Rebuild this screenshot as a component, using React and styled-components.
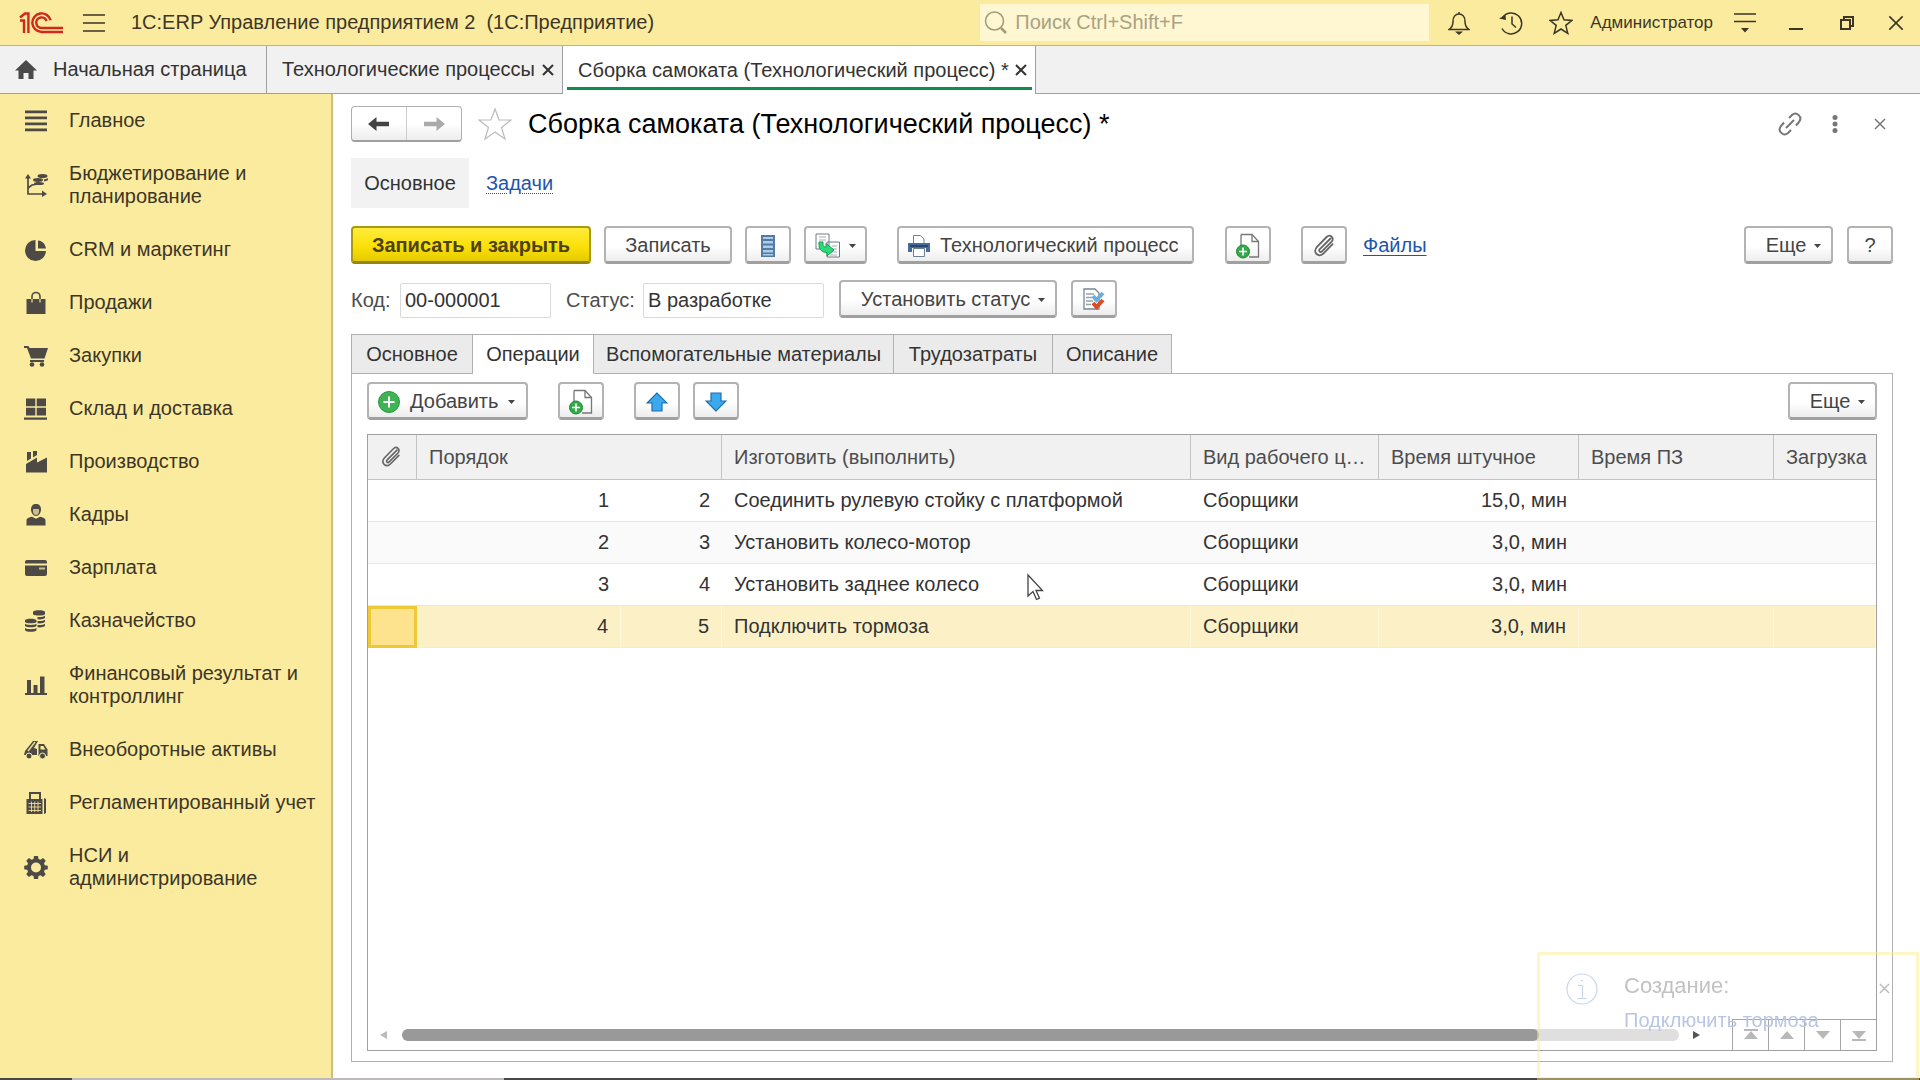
import React from 'react';
import styled, { createGlobalStyle, css } from 'styled-components';

const GlobalStyle = createGlobalStyle`
	* {
		box-sizing: border-box;
	}
	body {
		margin: 0;
		background: #fff;
	}
	body, button, input, table {
		font-family: 'Liberation Sans', Arial, sans-serif;
		font-size: 20px;
		line-height: 23px;
		color: #333;
	}
	button {
		padding: 0;
		border: 0;
		background: none;
	}
	svg {
		display: block;
		flex: none;
	}
`;

const Page = styled.div`
	display: flex;
	flex-direction: column;
	min-height: 100vh;
`;

const Header = styled.header`
	display: flex;
	align-items: center;
	height: 46px;
	padding-left: 19px;
	background: #fbeb9e;
	border-bottom: 1px solid #c3b573;
	color: #3d3626;
`;
const AppTitle = styled.div`
	flex: 1;
	margin-left: 6px;
	white-space: pre;
`;
const SearchBox = styled.label`
	display: flex;
	align-items: center;
	gap: 6px;
	width: 449px;
	height: 37px;
	margin-right: 14px;
	padding-left: 4px;
	background: #fff6d2;
`;
const SearchInput = styled.input`
	flex: 1;
	min-width: 0;
	border: 0;
	outline: 0;
	background: none;
	&::placeholder {
		color: #a9a284;
		opacity: 1;
	}
`;
const HeaderButton = styled.button`
	display: flex;
	align-items: center;
	justify-content: center;
	width: ${p => p.$width || 51}px;
	height: 40px;
	color: #3d3626;
`;
const UserName = styled.span`
	margin: 0 6px 0 14px;
	font-size: 17px;
`;

const WindowTabs = styled.nav`
	display: flex;
	height: 48px;
	background: #f1f1f1;
	border-bottom: 1px solid #a0a0a0;
`;
const WindowTab = styled.div`
	display: flex;
	align-items: center;
	width: ${p => p.$width}px;
	padding: 0 8px 0 15px;
	border-right: 1px solid #a0a0a0;
	white-space: nowrap;
	${p =>
		p.$active &&
		css`
			margin-bottom: -1px;
			background: linear-gradient(#0f8c50, #0f8c50) 4px 41px / calc(100% - 7px) 3px no-repeat #fff;
		`};
`;
const TabLabel = styled.button`
	display: flex;
	align-items: center;
	gap: 16px;
	flex: 1;
	min-width: 0;
	white-space: nowrap;
`;
const TabClose = styled.button`
	display: flex;
	align-items: center;
	justify-content: flex-end;
	width: 16px;
	height: 24px;
`;

const Body = styled.div`
	display: flex;
	flex: 1;
`;
const Sidebar = styled.nav`
	flex: none;
	width: 333px;
	background: #fbeb9e;
	border-right: 2px solid #cfbf7c;
`;
const SectionLink = styled.a`
	display: flex;
	align-items: center;
	gap: 21px;
	padding: 15px 16px 15px 24px;
	color: #3d3626;
	text-decoration: none;
	white-space: pre;
	svg {
		margin: -2px 0;
		color: #4d4a45;
	}
`;

const Main = styled.main`
	display: flex;
	flex: 1;
	flex-direction: column;
	min-width: 0;
	padding: 12px 27px 16px 18px;
`;
const Row = styled.div`
	display: flex;
	align-items: center;
`;
const TitleRow = styled(Row)`
	height: 36px;
	margin-right: -9px;
`;
const NavButtons = styled.div`
	display: flex;
	width: 111px;
	height: 36px;
	margin-right: 16px;
	border: 1px solid #b0b0b0;
	border-bottom: 2px solid #a0a0a0;
	border-radius: 4px;
	background: linear-gradient(#fff 50%, #ededed);
	button {
		display: flex;
		flex: 1;
		align-items: center;
		justify-content: center;
	}
	button + button {
		border-left: 1px solid #ccc;
	}
`;
const Title = styled.h1`
	flex: 1;
	margin: 0 0 0 16px;
	font-size: 27px;
	line-height: 30px;
	font-weight: normal;
	color: #000;
`;
const IconButton = styled.button`
	display: flex;
	align-items: center;
	justify-content: center;
	width: 45px;
	height: 36px;
	color: #777;
`;

const SubNav = styled(Row)`
	height: 50px;
	margin-top: 16px;
	gap: 17px;
`;
const SubNavCurrent = styled.button`
	width: 118px;
	height: 50px;
	background: #f2f2f2;
`;
const Link = styled.a`
	color: #1d54ad;
	text-decoration: underline ${p => (p.$dotted ? 'dotted' : 'solid')} 1px;
	text-underline-offset: 3px;
`;
const FilesLink = styled(Link)`
	margin-left: 16px;
`;

const CommandBar = styled(Row)`
	height: 38px;
	margin-top: ${p => p.$top}px;
`;
const Button = styled.button`
	display: flex;
	align-items: center;
	justify-content: ${p => (p.$left ? 'flex-start' : 'center')};
	gap: 8px;
	width: ${p => p.$width || 46}px;
	height: 38px;
	margin-left: ${p => p.$before || 0}px;
	padding: 2px 0 0 ${p => (p.$left ? 9 : 0)}px;
	border: 2px solid #b3b3b3;
	border-bottom: 3px solid #a0a0a0;
	border-radius: 4px;
	background: linear-gradient(#fff 55%, #ededed);
	color: #444;
	white-space: nowrap;
	${p =>
		p.$left &&
		css`
			gap: 10px;
		`};
	${p =>
		p.$primary &&
		css`
			border-color: #a89a10;
			border-bottom-color: #948600;
			background: linear-gradient(#ffec3c, #fbe008 55%, #e6cb00);
			color: #4d4310;
			font-weight: bold;
		`};
`;
const MenuButton = styled(Button)`
	padding-left: 10px;
`;
const Spacer = styled.div`
	flex: 1;
`;
const Field = styled.label`
	display: flex;
	align-items: center;
	justify-content: space-between;
	width: ${p => p.$width}px;
	margin-right: 15px;
	padding-top: 2px;
	color: #4d4d4d;
`;
const FieldInput = styled.input`
	width: ${p => p.$width}px;
	height: 35px;
	padding: 0 4px;
	border: 1px solid #d9d9d9;
	border-radius: 2px;
	outline: 0;
	background: #fff;
`;

const Tabs = styled.div`
	display: flex;
	height: 40px;
	margin-top: 16px;
	margin-bottom: -1px;
`;
const Tab = styled.button`
	width: ${p => p.$width}px;
	border: solid #b0b0b0;
	border-width: 1px 1px 1px 0;
	background: ${p => (p.$active ? '#fff' : '#ebebeb')};
	border-bottom-color: ${p => (p.$active ? '#fff' : '#b0b0b0')};
	white-space: nowrap;
	z-index: 1;
	&:first-child {
		border-left-width: 1px;
	}
`;
const Panel = styled.section`
	display: flex;
	flex: 1;
	flex-direction: column;
	padding: 0 15px 10px;
	border: 1px solid #b0b0b0;
`;

const Grid = styled.div`
	display: flex;
	flex: 1;
	flex-direction: column;
	margin-top: 14px;
	border: 1px solid #a0a0a0;
	overflow: hidden;
`;
const Table = styled.table`
	width: 100%;
	table-layout: fixed;
	border-collapse: separate;
	border-spacing: 0;
`;
const HeadCell = styled.th`
	height: 45px;
	padding: 0 10px 0 12px;
	background: #f1f1f1;
	border-bottom: 1px solid #c4c4c4;
	border-right: 1px solid #c4c4c4;
	color: #4d4d4d;
	font-weight: normal;
	text-align: left;
	white-space: nowrap;
	overflow: hidden;
	text-overflow: ellipsis;
	&:last-child {
		padding-right: 0;
		border-right: 0;
	}
`;
const Cell = styled.td`
	height: 42px;
	padding: 0 12px;
	border-bottom: 1px solid #e6e6e6;
	text-align: ${p => (p.$number ? 'right' : 'left')};
	white-space: nowrap;
`;
const TableRow = styled.tr`
	&:nth-child(even) {
		background: #fafafa;
	}
	${p =>
		p.$selected &&
		css`
			&& {
				background: #fcf1c6;
			}
			${Cell} {
				border-right: 1px solid #fdf6dc;
				border-bottom-color: #f5edcf;
			}
			${Cell}:first-child {
				background: #fde38e;
				border: 0;
				box-shadow: inset 0 0 0 3px #edc937;
			}
		`};
`;
const GridFooter = styled.div`
	display: flex;
	align-items: center;
	height: 31px;
	margin-top: auto;
	padding-left: 12px;
`;
const ScrollTrack = styled.div`
	flex: 1;
	height: 12px;
	margin: 0 14px 0 15px;
	border-radius: 6px;
	background: #dfdfdf;
`;
const ScrollThumb = styled.div`
	width: 89%;
	height: 12px;
	border-radius: 6px;
	background: #999;
`;
const PageButtons = styled.div`
	display: flex;
	align-self: stretch;
	margin-left: 32px;
`;
const PageButton = styled.button`
	display: flex;
	align-items: center;
	justify-content: center;
	width: 36px;
	border: solid #a6a6a6;
	border-width: 1px 0 0 1px;
`;

const Taskbar = styled.div`
	height: 2px;
	background: linear-gradient(90deg, #4c4747 72px, #bdb9bd 72px, #bdb9bd 504px, #4c4747 504px);
`;

// a notification that is half way through fading out
const Toast = styled.aside`
	position: fixed;
	right: 1px;
	bottom: 0;
	display: flex;
	align-items: flex-start;
	width: 382px;
	height: 128px;
	padding: 16px 26px 0 26px;
	border: 3px solid rgba(255, 236, 130, 0.45);
`;
const ToastText = styled.div`
	flex: 1;
	margin-left: 26px;
`;
const ToastTitle = styled.div`
	font-size: 22px;
	line-height: 30px;
	margin-bottom: 8px;
	color: #c2c2c2;
`;
const ToastLink = styled.a`
	color: #b9c6e2;
	text-decoration: none;
`;
const ToastClose = styled.button`
	margin-top: 12px;
`;

const Cursor = styled.svg`
	position: fixed;
	left: 1026px;
	top: 573px;
`;

const Logo = () => (
	<svg width='44' height='22' viewBox='0 0 44 22' fill='none' stroke='#d0281c' strokeWidth='2.4'>
		<path d='M1 5.500 6 1.500h3.400V21M1 8.500h4V21' />
		<path d='M31.600 8.300A9.300 9.300 0 1 0 22.500 20H44' />
		<path d='M27.600 9A5.300 5.300 0 1 0 22.500 16H44' />
	</svg>
);

const Cross = ({ size = 12, color = 'currentColor', width = 2 }) => (
	<svg width={size} height={size} viewBox='0 0 12 12' fill='none' stroke={color} strokeWidth={width}>
		<path d='M1 1l10 10M11 1 1 11' />
	</svg>
);

const Caret = () => (
	<svg width='7' height='4' viewBox='0 0 7 4'>
		<path d='M0 0h7L3.500 4z' fill='#444' />
	</svg>
);

const Clip = ({ size = 24 }) => (
	<svg width={size} height={size} viewBox='0 0 24 24' fill='none' stroke='#666' strokeWidth='1.800' strokeLinecap='round'>
		<path d='M18.500 4.500 7.800 15.200c-1.600 1.800.6 3.800 2.200 2.200l9.600-9.800c3.400-3.800-1.600-8-5-4.600L5 12.800c-5 5.400 1.600 11.600 6.600 6.600l9-9.200' />
	</svg>
);

const NewDoc = () => (
	<svg width='26' height='28' viewBox='0 0 26 28' fill='none'>
		<path d='M6 2.500h5M6 2.500V14M14 25h9.500V9.500L17 2.500H6' stroke='#777' strokeWidth='1.300' />
		<path d='M17 2.500v7h6.500' stroke='#777' strokeWidth='1.300' />
		<circle cx='8' cy='19.500' r='6.500' fill='#35a849' stroke='#1d8732' />
		<path d='M8 15.500v8M4 19.500h8' stroke='#fff' strokeWidth='1.600' />
	</svg>
);

const Arrow = ({ color, flip }) => (
	<svg width='22' height='16' viewBox='0 0 22 16'>
		<path
			d={flip ? 'M22 8 13.500 1v4.800H1v4.400h12.500V15z' : 'M0 8l8.500-7v4.800H21v4.400H8.500V15z'}
			fill={color}
		/>
	</svg>
);

const BlueArrow = ({ down }) => (
	<svg width='22' height='20' viewBox='0 0 22 20'>
		<path
			d={down ? 'M11 19 1 9h5V1h10v8h5z' : 'M11 1 1 11h5v8h10v-8h5z'}
			fill='#3ba9ee'
			stroke='#1f6fa8'
			strokeWidth='1.200'
		/>
	</svg>
);

const PageArrow = ({ down, edge }) => (
	<svg width='16' height='12' viewBox='0 0 16 12' fill='#b8b8b8'>
		<path d={down ? 'M1 2h14l-7 8z' : 'M1 10h14L8 2z'} />
		{edge && <path d={down ? 'M1 10h14v2H1z' : 'M1 0h14v2H1z'} />}
	</svg>
);

const glyphs = {
	main: <path d='M1 1.500h22v2.800H1zM1 7.500h22v2.800H1zM1 13.500h22v2.800H1zM1 19.500h22v2.800H1z' />,
	budget: (
		<g>
			<path d='M4 3v18h16M4 15l4-3 3-.5 3-2' fill='none' stroke='currentColor' strokeWidth='1.700' />
			<path d='M1 5.500 4 1l3 4.500zM18 17.500l5 3.500-5 3z' />
			<ellipse cx='18.500' cy='3' rx='5' ry='2' />
			<ellipse cx='14' cy='7' rx='5' ry='1.900' />
			<ellipse cx='15' cy='10.500' rx='5' ry='1.500' />
			<path d='M20 6.500l4-1.200v2l-4 1.300z' />
		</g>
	),
	crm: (
		<g>
			<circle cx='11.500' cy='12.500' r='10.500' />
			<path d='M11.500 0v13H24V9.500h-9V0z' fill='#fbeb9e' />
			<path d='M14 2.500A9 9 0 0 1 22 10.500h-8z' />
		</g>
	),
	sales: (
		<g>
			<path d='M2.500 8h19v15h-19z' />
			<path d='M8 8V5.500a4 4 0 0 1 8 0V8' fill='none' stroke='currentColor' strokeWidth='1.600' />
			<path d='M8 8v3.500M16 8v3.500' stroke='#fbeb9e' strokeWidth='1.200' />
		</g>
	),
	purchase: (
		<g>
			<path d='M0 2h4.500l1 2H24l-3.500 10.500H7L3 4H0z' />
			<path d='M6 16h14v2H6z' />
			<circle cx='8' cy='20.500' r='2.300' />
			<circle cx='18' cy='20.500' r='2.300' />
		</g>
	),
	stock: <path d='M2 1.500h9.300v7.800H2zM12.700 1.500H22v7.800h-9.300zM2 10.700h9.300v7.800H2zM12.700 10.700H22v7.800h-9.300zM0 20.500h23v2.300H0z' />,
	production: <path d='M2 22.500V14l11-6.500v5L23 7.500v15zM3 2h4v6.500l-4 2.500zM9 1h4v4l-4 2.500z' />,
	staff: (
		<g>
			<path d='M12 1c-3.200 0-5 2-5 5.500 0 3.200 2.200 6.500 5 6.500s5-3.300 5-6.500C17 3 15.200 1 12 1z' />
			<path d='M9 6h6v2.500c0 2-1.300 3.500-3 3.500s-3-1.500-3-3.500z' fill='#cabf85' />
			<path d='M2.500 22.500v-5c0-2 1.500-2.700 5.500-3.700l4 2 4-2c4 1 5.500 1.700 5.500 3.700v5z' />
		</g>
	),
	salary: (
		<g>
			<path d='M3 4h18a2 2 0 0 1 2 2v1.500H1V6a2 2 0 0 1 2-2zM1 9.500h22V18a2 2 0 0 1-2 2H3a2 2 0 0 1-2-2z' />
			<path d='M15 11.500h6v2h-6z' fill='#cabf85' />
		</g>
	),
	treasury: (
		<g>
			<path d='M9 3c0-2.500 12-2.500 12 0v2c0 2-12 2-12 0zM13.500 8c3 .3 6.500-.2 7.500-1.200V9c-1 1.200-4.500 1.600-7.500 1.300zM13.500 12c3 .3 6.500-.2 7.500-1.200V13c-1 1.200-4.500 1.600-7.500 1.300zM13.500 16c3 .3 6.500-.2 7.500-1.200V17c-1 1.200-4.500 1.600-7.500 1.300z' />
			<path d='M1 11.500c0-2.300 11.500-2.300 11.500 0v1.200c0 2-11.500 2-11.500 0zM1 14.700c2 1.600 9.500 1.600 11.500 0v2.200c-1.500 1.800-10 1.800-11.500 0zM1 19c2 1.600 9.500 1.600 11.500 0v2.200c-1.500 2-10 2-11.500 0z' />
		</g>
	),
	finance: <path d='M3 7h4v13h2.500v-8h4v8H16V3.500h4.500V20H23v2H1v-2h2z' />,
	assets: (
		<g>
			<path d='M1 13 9 3h5l-4 7 3 1v6H0z' />
			<path d='M4 13l7-9' stroke='#e8da95' strokeWidth='1.500' />
			<path d='M14.500 6H20l3.500 5.500V18H14.500z' />
			<path d='M16.500 8h2.800l2 3.500h-4.800z' fill='#fbeb9e' />
			<circle cx='5' cy='18' r='3' stroke='#fbeb9e' strokeWidth='1' />
			<circle cx='18.500' cy='18' r='3' stroke='#fbeb9e' strokeWidth='1' />
		</g>
	),
	accounting: (
		<g>
			<path d='M5 1h12v7h1.500v15H2.500V8H5zM20 7l2 1v14l-2 1z' />
			<path d='M7 3h8v5H7z' fill='#fbeb9e' />
			<path d='M4.500 12.500H17M4.500 16H17M4.500 19.500H17M7.500 10.500V21M10.700 10.500V21M14 10.500V21' stroke='#fbeb9e' strokeWidth='.8' />
		</g>
	),
	settings: (
		<path
			fillRule='evenodd'
			d='M10 1h4l.5 3 2 .8L19 3l2.800 2.800L20 8.300l.8 2 3 .5v3.400l-3 .6-.8 2 1.800 2.500L19 22l-2.500-1.800-2 .8-.5 3h-4l-.5-3-2-.8L5 22l-2.800-2.700L4 16.800l-.8-2-3-.6v-3.400l3-.5.8-2L2.200 5.800 5 3l2.500 1.800 2-.8zM12 7.500a5 5 0 1 0 0 10 5 5 0 0 0 0-10z'
		/>
	)
};

const sections = [
	['main', 'Главное'],
	['budget', 'Бюджетирование и\nпланирование'],
	['crm', 'CRM и маркетинг'],
	['sales', 'Продажи'],
	['purchase', 'Закупки'],
	['stock', 'Склад и доставка'],
	['production', 'Производство'],
	['staff', 'Кадры'],
	['salary', 'Зарплата'],
	['treasury', 'Казначейство'],
	['finance', 'Финансовый результат и\nконтроллинг'],
	['assets', 'Внеоборотные активы'],
	['accounting', 'Регламентированный учет'],
	['settings', 'НСИ и\nадминистрирование']
];

const tabs = [
	['Основное', 122],
	['Операции', 121],
	['Вспомогательные материалы', 300],
	['Трудозатраты', 159],
	['Описание', 119]
];

const operations = [
	{ order: 1, next: 2, name: 'Соединить рулевую стойку с платформой', center: 'Сборщики', time: '15,0, мин' },
	{ order: 2, next: 3, name: 'Установить колесо-мотор', center: 'Сборщики', time: '3,0, мин' },
	{ order: 3, next: 4, name: 'Установить заднее колесо', center: 'Сборщики', time: '3,0, мин' },
	{ order: 4, next: 5, name: 'Подключить тормоза', center: 'Сборщики', time: '3,0, мин' }
];

const TopBar = () => (
	<Header>
		<Logo />
		<HeaderButton $width={62} aria-label='Меню'>
			<svg width='22' height='18' viewBox='0 0 22 18' stroke='currentColor' strokeWidth='1.500'>
				<path d='M0 1h22M0 9h22M0 17h22' />
			</svg>
		</HeaderButton>
		<AppTitle>{'1C:ERP Управление предприятием 2  (1С:Предприятие)'}</AppTitle>
		<SearchBox>
			<svg width='23' height='23' viewBox='0 0 23 23' fill='none' stroke='#a39b78' strokeWidth='1.500'>
				<circle cx='10.500' cy='10' r='9' />
				<path d='M17 17l5 5' strokeWidth='2.500' />
			</svg>
			<SearchInput placeholder='Поиск Ctrl+Shift+F' aria-label='Поиск' />
		</SearchBox>
		<HeaderButton $width={32} aria-label='Уведомления'>
			<svg width='22' height='24' viewBox='0 0 22 24' fill='none' stroke='currentColor' strokeWidth='1.500'>
				<path d='M11 1v2M1 18.500c3-2 4-4 4-8C5 6 7.500 3 11 3s6 3 6 7.500c0 4 1 6 4 8z' />
				<path d='M7 20.500h8L11 24z' fill='currentColor' stroke='none' />
			</svg>
		</HeaderButton>
		<HeaderButton $width={71} aria-label='История'>
			<svg width='24' height='24' viewBox='0 0 24 24' fill='none' stroke='currentColor' strokeWidth='1.500'>
				<path d='M3.500 6.500A10.500 10.500 0 1 1 3 17.500M13 5.500V13l4 3.500' />
				<path d='M0 7.500 7 9l-.5-5z' fill='currentColor' stroke='none' />
			</svg>
		</HeaderButton>
		<HeaderButton $width={30} aria-label='Избранное'>
			<svg width='24' height='24' viewBox='0 0 24 24' fill='none' stroke='currentColor' strokeWidth='1.500'>
				<path d='M12 1.500l3 7.300 8 .6-6.200 5 2 8L12 18l-6.800 4.400 2-8L1 9.400l8-.6z' />
			</svg>
		</HeaderButton>
		<UserName>Администратор</UserName>
		<HeaderButton aria-label='Настройки'>
			<svg width='22' height='20' viewBox='0 0 22 20' stroke='currentColor' strokeWidth='1.500'>
				<path d='M0 1h22M0 8.500h22' />
				<path d='M7 15h8l-4 4.500z' fill='currentColor' stroke='none' />
			</svg>
		</HeaderButton>
		<HeaderButton aria-label='Свернуть'>
			<svg width='14' height='16' viewBox='0 0 14 16'>
				<path d='M0 13h14v2H0z' fill='currentColor' />
			</svg>
		</HeaderButton>
		<HeaderButton aria-label='Восстановить'>
			<svg width='14' height='14' viewBox='0 0 14 14' fill='none' stroke='currentColor' strokeWidth='2'>
				<path d='M1 4h9v9H1zM4 4V1h9v9h-3' />
			</svg>
		</HeaderButton>
		<HeaderButton $width={48} aria-label='Закрыть'>
			<Cross size={16} width={1.2} />
		</HeaderButton>
	</Header>
);

const OpenWindows = () => (
	<WindowTabs>
		<WindowTab $width={267}>
			<TabLabel>
				<svg width='22' height='19' viewBox='0 0 22 19' fill='#4a4a4a'>
					<path d='M11 0 22 10.500h-3.500V19h-5v-6h-5v6h-5v-8.500H0z' />
				</svg>
				Начальная страница
			</TabLabel>
		</WindowTab>
		<WindowTab $width={296}>
			<TabLabel>Технологические процессы</TabLabel>
			<TabClose aria-label='Закрыть вкладку'>
				<Cross />
			</TabClose>
		</WindowTab>
		<WindowTab $width={473} $active>
			<TabLabel>Сборка самоката (Технологический процесс) *</TabLabel>
			<TabClose aria-label='Закрыть вкладку'>
				<Cross />
			</TabClose>
		</WindowTab>
	</WindowTabs>
);

const Operations = () => (
	<Table>
		<colgroup>
			<col width='49' />
			<col width='204' />
			<col width='101' />
			<col />
			<col width='188' />
			<col width='200' />
			<col width='195' />
			<col width='102' />
		</colgroup>
		<thead>
			<tr>
				<HeadCell aria-label='Файлы'>
					<Clip size={22} />
				</HeadCell>
				<HeadCell colSpan={2}>Порядок</HeadCell>
				<HeadCell>Изготовить (выполнить)</HeadCell>
				<HeadCell>Вид рабочего центра</HeadCell>
				<HeadCell>Время штучное</HeadCell>
				<HeadCell>Время ПЗ</HeadCell>
				<HeadCell>Загрузка</HeadCell>
			</tr>
		</thead>
		<tbody>
			{operations.map(item => (
				<TableRow key={item.order} $selected={item.order === 4}>
					<Cell />
					<Cell $number>{item.order}</Cell>
					<Cell $number>{item.next}</Cell>
					<Cell>{item.name}</Cell>
					<Cell>{item.center}</Cell>
					<Cell $number>{item.time}</Cell>
					<Cell />
					<Cell />
				</TableRow>
			))}
		</tbody>
	</Table>
);

const App = () => (
	<Page>
		<GlobalStyle />
		<TopBar />
		<OpenWindows />
		<Body>
			<Sidebar>
				{sections.map(([icon, label]) => (
					<SectionLink key={icon} href='#'>
						<svg width='24' height='24' viewBox='0 0 24 24' fill='currentColor'>
							{glyphs[icon]}
						</svg>
						{label}
					</SectionLink>
				))}
			</Sidebar>
			<Main>
				<TitleRow>
					<NavButtons>
						<button aria-label='Назад'>
							<Arrow color='#444' />
						</button>
						<button aria-label='Вперед'>
							<Arrow color='#aaa' flip />
						</button>
					</NavButtons>
					<svg width='34' height='34' viewBox='0 0 34 34' fill='#fff' stroke='#bbb' strokeWidth='1.200'>
						<path d='M17 2l4 11h12l-9.500 7.500L27 32l-10-7-10 7 3.500-11.500L1 13h12z' />
					</svg>
					<Title>Сборка самоката (Технологический процесс) *</Title>
					<IconButton aria-label='Ссылка'>
						<svg width='24' height='24' viewBox='0 0 24 24' fill='none' stroke='currentColor' strokeWidth='2'>
							<path d='M11 6l3-3c4.500-4 11 2 7 7l-3 3.500M13 18l-3 3c-4.500 4-11-2-7-7l3-3.500M8 16l8-8' />
						</svg>
					</IconButton>
					<IconButton aria-label='Еще'>
						<svg width='6' height='18' viewBox='0 0 6 18' fill='currentColor'>
							<circle cx='3' cy='2.500' r='2.500' />
							<circle cx='3' cy='9' r='2.500' />
							<circle cx='3' cy='15.500' r='2.500' />
						</svg>
					</IconButton>
					<IconButton aria-label='Закрыть'>
						<Cross width={1.5} />
					</IconButton>
				</TitleRow>
				<SubNav>
					<SubNavCurrent>Основное</SubNavCurrent>
					<Link href='#' $dotted>
						Задачи
					</Link>
				</SubNav>
				<CommandBar $top={18}>
					<Button $primary $width={240}>
						Записать и закрыть
					</Button>
					<Button $width={128} $before={13}>
						Записать
					</Button>
					<Button $before={13} aria-label='Список'>
						<svg width='16' height='22' viewBox='0 0 16 22'>
							<path d='M1 0h14v22H1z' fill='#557ba3' />
							<path d='M3 2h10v2H3zM3 6h10v2.500H3zM3 10.500h10V13H3zM3 15h10v2.500H3zM3 19h10v1.500H3z' fill='#a9cdea' />
						</svg>
					</Button>
					<Button $width={63} $before={13} aria-label='Создать на основании'>
						<svg width='26' height='26' viewBox='0 0 26 26' fill='none'>
							<path d='M1 1h13v15H1zM12 9h12.500v15H12z' fill='#fff' stroke='#6d7a86' />
							<path d='M4 4h7M4 7h7M17 13h5M17 16h5M17 19h5M15 22h7' stroke='#a5adb5' />
							<path d='M4 9h4v3c0 1.500 1 2 3 2v-3.500l8 6.500-7 6v-3.500c-5 0-8-3-8-7.500z' fill='#2bdc78' stroke='#159a4c' />
						</svg>
						<Caret />
					</Button>
					<Button $width={297} $before={30} $left>
						<svg width='22' height='22' viewBox='0 0 22 22'>
							<path d='M0 8h22v9h-4v-4H4v4H0z' fill='#466c9c' />
							<path d='M5.500 8V.5h7L16 4v4M5.500 13.500h11v8h-11z' fill='#fff' stroke='#6c7f94' />
							<path d='M2 10h18v2H2z' fill='#29466e' />
						</svg>
						Технологический процесс
					</Button>
					<Button $before={31} aria-label='Добавить документ'>
						<NewDoc />
					</Button>
					<Button $before={30} aria-label='Присоединить файл'>
						<Clip />
					</Button>
					<FilesLink href='#'>Файлы</FilesLink>
					<Spacer />
					<MenuButton $width={89}>
						Еще
						<Caret />
					</MenuButton>
					<Button $before={14}>?</Button>
				</CommandBar>
				<CommandBar $top={16}>
					<Field $width={200}>
						Код:
						<FieldInput $width={151} defaultValue='00-000001' />
					</Field>
					<Field $width={258}>
						Статус:
						<FieldInput $width={181} defaultValue='В разработке' />
					</Field>
					<MenuButton $width={218}>
						Установить статус
						<Caret />
					</MenuButton>
					<Button $before={14} aria-label='Проверить'>
						<svg width='22' height='24' viewBox='0 0 22 24' fill='none'>
							<path d='M1 1h11l4 4v16H1z' fill='#fff' stroke='#7a8590' strokeWidth='1.300' />
							<path d='M3 6h8M3 9.500h6M3 13h7M3 16.500h5' stroke='#98a2ac' strokeWidth='1.300' />
							<path d='M10 8l3.500 4L20 5' stroke='#69afe0' strokeWidth='4' />
							<path d='M10 15l3.500 4 6.500-7' stroke='#dd4b22' strokeWidth='4' />
						</svg>
					</Button>
				</CommandBar>
				<Tabs>
					{tabs.map(([label, width]) => (
						<Tab key={label} $width={width} $active={label === 'Операции'}>
							{label}
						</Tab>
					))}
				</Tabs>
				<Panel>
					<CommandBar $top={8}>
						<Button $width={161} $left>
							<svg width='22' height='22' viewBox='0 0 22 22'>
								<circle cx='11' cy='11' r='10.500' fill='#3fb455' stroke='#2b963f' />
								<path d='M11 5.500v11M5.500 11h11' stroke='#fff' strokeWidth='2' />
							</svg>
							Добавить
							<Caret />
						</Button>
						<Button $before={30} aria-label='Новый документ'>
							<NewDoc />
						</Button>
						<Button $before={30} aria-label='Вверх'>
							<BlueArrow />
						</Button>
						<Button $before={13} aria-label='Вниз'>
							<BlueArrow down />
						</Button>
						<Spacer />
						<MenuButton $width={89}>
							Еще
							<Caret />
						</MenuButton>
					</CommandBar>
					<Grid>
						<Operations />
						<GridFooter>
							<svg width='7' height='8' viewBox='0 0 7 8'>
								<path d='M7 0v8L0 4z' fill='#bbb' />
							</svg>
							<ScrollTrack>
								<ScrollThumb />
							</ScrollTrack>
							<svg width='7' height='8' viewBox='0 0 7 8'>
								<path d='M0 0v8l7-4z' fill='#555' />
							</svg>
							<PageButtons>
								<PageButton aria-label='В начало'>
									<PageArrow edge />
								</PageButton>
								<PageButton aria-label='Назад'>
									<PageArrow />
								</PageButton>
								<PageButton aria-label='Вперед'>
									<PageArrow down />
								</PageButton>
								<PageButton aria-label='В конец'>
									<PageArrow down edge />
								</PageButton>
							</PageButtons>
						</GridFooter>
					</Grid>
				</Panel>
			</Main>
		</Body>
		<Taskbar />
		<Toast>
			<svg width='32' height='36' viewBox='0 0 32 36' fill='none' stroke='#c9d6e8' strokeWidth='1.200'>
				<circle cx='16' cy='18' r='15' />
				<path d='M12 14.500h4.500V27M11 27.500h10M15 9.500h2' />
			</svg>
			<ToastText>
				<ToastTitle>Создание:</ToastTitle>
				<ToastLink href='#'>Подключить тормоза</ToastLink>
			</ToastText>
			<ToastClose aria-label='Закрыть уведомление'>
				<Cross size={11} color='#bbb' width={1.5} />
			</ToastClose>
		</Toast>
		<Cursor width='18' height='28' viewBox='0 0 18 28'>
			<path d='M2 2v21l5-4.500 3.500 8 3-1.300L10 17.500h6.500z' fill='#fff' stroke='#444' strokeWidth='1.300' />
		</Cursor>
	</Page>
);

export default App;
